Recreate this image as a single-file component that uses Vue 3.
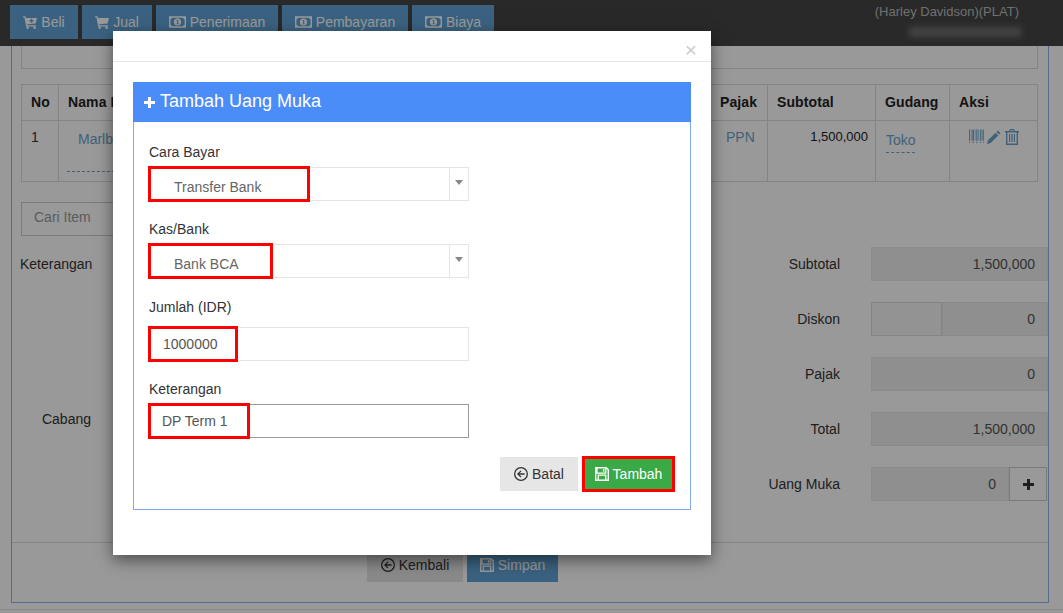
<script setup>
const navItems = [
  { label: 'Beli', icon: 'cart-plus', w: 68 },
  { label: 'Jual', icon: 'cart', w: 70 },
  { label: 'Penerimaan', icon: 'money', w: 122 },
  { label: 'Pembayaran', icon: 'money', w: 126 },
  { label: 'Biaya', icon: 'money', w: 82 },
]
const summary = ['Subtotal', 'Pajak', 'Total']
</script>

<template>
  <div class="page">
    <svg class="defs" aria-hidden="true">
      <symbol id="i-cart" viewBox="0 0 16 16"><path d="M0 1.5h2.8l.5 1.8H16l-1.6 6.4-9.6 1 .3 1.1h9.4v1.4H3.6L1.7 2.9H0zM5.3 13.2a1.4 1.4 0 1 1 0 2.8 1.4 1.4 0 0 1 0-2.8zm8 0a1.4 1.4 0 1 1 0 2.8 1.4 1.4 0 0 1 0-2.8z"/></symbol>
      <symbol id="i-cart-plus" viewBox="0 0 16 16"><path fill-rule="evenodd" d="M0 1.5h2.8l.5 1.8H16l-1.6 6.4-9.6 1 .3 1.1h9.4v1.4H3.6L1.7 2.9H0zM9 4.2v1.6H7.4v1.5H9v1.6h1.5V7.3h1.6V5.8h-1.6V4.2zM5.3 13.2a1.4 1.4 0 1 1 0 2.8 1.4 1.4 0 0 1 0-2.8zm8 0a1.4 1.4 0 1 1 0 2.8 1.4 1.4 0 0 1 0-2.8z"/></symbol>
      <symbol id="i-money" viewBox="0 0 18 14"><path fill-rule="evenodd" d="M0 1h18v12H0zm3 1.6A1.6 1.6 0 0 1 1.5 4.2v5.6A1.6 1.6 0 0 1 3 11.4h12a1.6 1.6 0 0 1 1.5-1.6V4.2A1.6 1.6 0 0 1 15 2.6zM9 3.2a3.8 3.8 0 1 1 0 7.6 3.8 3.8 0 0 1 0-7.6zM8 5v.9h.6v2.6H8v.9h2.4v-.9h-.6V5z"/></symbol>
      <symbol id="i-back" viewBox="1 1 14 14"><path fill-rule="evenodd" d="M8 1a7 7 0 1 1 0 14A7 7 0 0 1 8 1zm0 1.3a5.7 5.7 0 1 0 0 11.4A5.7 5.7 0 0 0 8 2.3zM7.6 4.4l.9.9-2 2h5.1v1.4H6.5l2 2-.9.9L4 8z"/></symbol>
      <symbol id="i-save" viewBox="1 1 14 14"><path fill-rule="evenodd" d="M1 1h11.5L15 3.5V15H1zm2.6 1.4v4.2h7.6V2.4zm5.3.6h1.5v2.8H8.9zM2.4 2.4v11.2h1.2V8.6h8.8v5h1.2V4.1l-1.2-1.2v4.9H2.4zm2.5 7.4v3.8h6.2V9.8z"/></symbol>
      <symbol id="i-plus" viewBox="0 0 12 12"><path d="M4.4 0h3.2v4.4H12v3.2H7.6V12H4.4V7.6H0V4.4h4.4z"/></symbol>
      <symbol id="i-barcode" viewBox="0 0 16 15"><path d="M0 0h1v12H0zm2 0h.6v12H2zm1.6 0h1.6v12H3.6zm2.6 0h.6v12h-.6zm1.6 0h1.2v12H7.8zm2.2 0h.6v12H10zm1.6 0h1v12h-1zm1.8 0h1v12h-1zm1.8 0h.8v12h-.8zM0 13h1v1.4H0zm3.6 0h1.6v1.4H3.6zm4.2 0H9v1.4H7.8zm3.8 0h1v1.4h-1zm3.6 0h.8v1.4h-.8z"/></symbol>
      <symbol id="i-pencil" viewBox="0 0 16 16"><path d="M12.4 0.6l3 3-1.6 1.6-3-3zM9.8 3.2l3 3-8.6 8.6L0 16l1.2-4.2z"/></symbol>
      <symbol id="i-trash" viewBox="0 0 14 16"><path fill-rule="evenodd" d="M5 0h4l1 2h4v1.4h-1V16H1V3.4H0V2h4zm.6 1.2L5.3 2h3.4l-.3-.8zM2.4 3.4v11.2h9.2V3.4zM4 5h1.2v8H4zm2.4 0h1.2v8H6.4zm2.4 0H10v8H8.8z"/></symbol>
    </svg>

    <header class="navbar">
      <nav class="nav-buttons">
        <button v-for="item in navItems" :key="item.label" class="btn btn-primary" :style="{ width: item.w + 'px' }">
          <svg class="ico" :class="{ wide: item.icon === 'money' }"><use :href="'#i-' + item.icon" /></svg>{{ item.label }}
        </button>
      </nav>
      <div class="user">
        <div>(Harley Davidson)(PLAT)</div>
        <div class="blurred"></div>
      </div>
    </header>

    <main class="panel">
      <div class="filter-box"></div>

      <table class="items">
        <thead>
          <tr>
            <th class="c-no">No</th>
            <th class="c-name">Nama Item</th>
            <th class="c-pajak">Pajak</th>
            <th class="c-sub">Subtotal</th>
            <th class="c-gudang">Gudang</th>
            <th class="c-aksi">Aksi</th>
          </tr>
        </thead>
        <tbody>
          <tr>
            <td class="no-cell">1</td>
            <td class="name-cell"><span class="link dashed name-link">Marlboro</span></td>
            <td class="link pajak-cell">PPN</td>
            <td class="num">1,500,000</td>
            <td class="gudang-cell"><span class="link dashed">Toko</span></td>
            <td class="aksi-cell">
              <svg class="a-bar"><use href="#i-barcode" /></svg>
              <svg class="a-pen"><use href="#i-pencil" /></svg>
              <svg class="a-trash"><use href="#i-trash" /></svg>
            </td>
          </tr>
        </tbody>
      </table>

      <input class="search" placeholder="Cari Item" />

      <section class="totals">
        <div class="left-labels">
          <label>Keterangan</label>
          <label>Cabang</label>
        </div>
        <div class="right-form">
          <div class="t-row"><label>{{ summary[0] }}</label><div class="ro">1,500,000</div></div>
          <div class="t-row"><label>Diskon</label><div class="group"><div class="free"></div><div class="ro grow">0</div></div></div>
          <div class="t-row"><label>{{ summary[1] }}</label><div class="ro">0</div></div>
          <div class="t-row"><label>{{ summary[2] }}</label><div class="ro">1,500,000</div></div>
          <div class="t-row"><label>Uang Muka</label><div class="group"><div class="ro grow">0</div><div class="add"><svg class="a-plus"><use href="#i-plus" /></svg></div></div></div>
        </div>
      </section>

      <footer class="panel-foot">
        <button class="btn btn-default back-btn"><svg class="ico"><use href="#i-back" /></svg>Kembali</button>
        <button class="btn btn-primary save-btn"><svg class="ico"><use href="#i-save" /></svg>Simpan</button>
      </footer>
    </main>
    <div class="page-foot"></div>

    <div class="backdrop"></div>

    <div class="modal">
      <div class="modal-head"><span class="close">×</span></div>
      <div class="modal-body">
        <div class="form-panel">
          <div class="form-head"><svg class="head-plus"><use href="#i-plus" /></svg>Tambah Uang Muka</div>
          <div class="form-body">
            <div class="f-label">Cara Bayar</div>
            <div class="field select">
              <span class="sel-text">Transfer Bank</span><span class="sel-arrow"></span>
              <i class="mark m-cara"></i>
            </div>
            <div class="f-label">Kas/Bank</div>
            <div class="field select">
              <span class="sel-text">Bank BCA</span><span class="sel-arrow"></span>
              <i class="mark m-kas"></i>
            </div>
            <div class="f-label l-jumlah">Jumlah (IDR)</div>
            <div class="field text">1000000<i class="mark m-jumlah"></i></div>
            <div class="f-label">Keterangan</div>
            <div class="field text focus">DP Term 1<i class="mark m-ket"></i></div>
            <div class="form-actions">
              <button class="btn batal"><svg class="ico"><use href="#i-back" /></svg>Batal</button>
              <button class="btn tambah"><svg class="ico"><use href="#i-save" /></svg>Tambah<i class="mark m-tambah"></i></button>
            </div>
          </div>
        </div>
      </div>
    </div>
  </div>
</template>

<style>
html, body { margin: 0; height: 100%; overflow: hidden; }
</style>

<style scoped>
.page {
  position: relative;
  width: 1063px;
  height: 613px;
  overflow: hidden;
  background: #fff;
  color: #333;
  font: 14px/20px "Liberation Sans", Arial, sans-serif;
}
.defs { position: absolute; width: 0; height: 0; }
.navbar {
  height: 46px;
  background: #454545;
  display: flex;
  justify-content: space-between;
  box-sizing: border-box;
}
.nav-buttons { display: flex; gap: 4px; padding: 5px 0 0 10px; align-items: flex-start; }
.btn {
  height: 34px;
  border: 0;
  padding: 0;
  font: inherit;
  display: inline-flex;
  align-items: center;
  justify-content: center;
  cursor: default;
}
.btn-primary { background: #62a4d6; color: #fff; }
.btn-default { background: #e6e6e6; color: #333; }
.ico { width: 14px; height: 14px; margin-right: 4px; fill: currentColor; flex: none; }
.ico.wide { width: 17px; height: 14px; margin-right: 4px; }
.user {
  display: flex;
  flex-direction: column;
  align-items: flex-end;
  padding: 3px 44px 0 0;
  color: #bbb;
  font-size: 13px;
  line-height: 18px;
  white-space: nowrap;
}
.blurred { width: 112px; height: 10px; margin: 6px -2px 0 0; background: #717171; filter: blur(3px); }

.panel {
  box-sizing: border-box;
  width: 1038px;
  height: 557px;
  margin-left: 11px;
  border: 1px solid #8db4ec;
  border-top: 0;
  padding: 0 10px;
  position: relative;
  display: flex;
  flex-direction: column;
}
.page-foot { margin-top: 6px; border-top: 1px solid #e5e5e5; }
.filter-box { height: 23px; border: 1px solid #ddd; border-top: 0; margin-left: -1px; width: 1017px; box-sizing: border-box; flex: none; }
.items {
  margin: 15px 0 0 -1px;
  width: 1017px;
  height: 98px;
  border-collapse: collapse;
  table-layout: fixed;
  border: 1px solid #689fd2;
  flex: none;
}
.items th, .items td { border: 1px solid #ddd; padding: 8px 9px; text-align: left; vertical-align: top; }
.items th { height: 20px; padding-top: 7px; font-weight: bold; color: #222; letter-spacing: .1px; vertical-align: middle; }
.c-no { width: 18px; }
.c-name { width: auto; }
.c-pajak { width: 38px; }
.c-sub { width: 89px; }
.c-gudang { width: 55px; }
.c-aksi { width: 69px; }
.link { color: #6aa3cc; }
.dashed { display: inline-block; border-bottom: 1px dashed #6aa3cc; }
.items .no-cell { padding-top: 6px; }
.items .name-cell { padding-left: 19px; }
.name-link { padding: 0 0 22px 11px; margin-left: -11px; width: 620px; }
.items .pajak-cell { padding: 6px 0 0 15px; }
.items .num { text-align: right; font-size: 13px; padding: 6px 7px 0 0; color: #222; }
.items .gudang-cell { padding: 9px 0 0 10px; }
.gudang-cell .dashed { padding-bottom: 2px; width: 29px; }
.items .aksi-cell { padding: 7px 0 0 19px; white-space: nowrap; font-size: 0; }
.aksi-cell svg { fill: #6aa3cc; vertical-align: top; }
.a-bar { width: 15px; height: 15px; margin-right: 3px; margin-top: 1px; }
.a-pen { width: 14px; height: 14px; margin-right: 4px; margin-top: 2px; }
.a-trash { width: 14px; height: 16px; margin-top: 1px; }

.search {
  box-sizing: border-box;
  width: 160px;
  height: 34px;
  margin: 20px 0 0 -1px;
  padding: 0 12px 4px;
  border: 1px solid #ccc;
  background: #fff;
  font: inherit;
  flex: none;
  outline: 0;
}
.search::placeholder { color: #999; opacity: 1; }

.totals { display: flex; justify-content: space-between; margin-top: 11px; flex: none; }
.left-labels {
  width: 71px;
  margin-left: -2px;
  text-align: right;
  display: flex;
  flex-direction: column;
  gap: 135px;
  padding-top: 7px;
}
.right-form { display: flex; flex-direction: column; gap: 21px; margin-right: -10px; }
.t-row { display: flex; align-items: center; gap: 31px; justify-content: flex-end; }
.ro, .group { width: 177px; height: 34px; box-sizing: border-box; }
.ro { background: #eee; color: #555; text-align: right; padding: 0 12px; line-height: 32px; border: 1px solid #e6e6e6; }
.group { display: flex; }
.free { width: 71px; border: 1px solid #ddd; box-sizing: border-box; background: #f5f5f5; }
.ro.grow { flex: 1; width: auto; }
.add { width: 38px; height: 34px; box-sizing: border-box; border: 1px solid #ccc; background: #fff; display: flex; align-items: center; justify-content: center; margin-right: 1px; }
.a-plus { width: 11px; height: 11px; fill: #333; }

.panel-foot {
  position: absolute;
  left: 0; right: 0;
  top: 496px;
  height: 60px;
  border-top: 1px solid #ddd;
  display: flex;
  justify-content: flex-start;
  gap: 4px;
  padding: 5px 0 0 355px;
  box-sizing: border-box;
}
.back-btn { width: 96px; }
.save-btn { width: 91px; }

.backdrop { position: absolute; inset: 0; background: rgba(0, 0, 0, .4); }

.modal {
  position: absolute;
  left: 113px;
  top: 31px;
  width: 598px;
  height: 524px;
  background: #fff;
  box-shadow: 0 5px 15px rgba(0, 0, 0, .5);
}
.modal-head { height: 30px; border-bottom: 1px solid #e5e5e5; position: relative; }
.close {
  position: absolute;
  right: 14px;
  top: 7px;
  font-size: 21px;
  line-height: 24px;
  color: #ccc;
}
.modal-body { padding: 20px; }
.form-panel { border: 1px solid #7fa8ec; border-top: 0; height: 428px; box-sizing: border-box; }
.form-head {
  height: 40px;
  box-sizing: border-box;
  margin: 0 -1px;
  padding: 0 0 2px 11px;
  background: #4b8df8;
  color: #fff;
  font-size: 18px;
  display: flex;
  align-items: center;
}
.head-plus { width: 11px; height: 11px; fill: #fff; margin: 2px 5px 0 0; }
.form-body { padding: 20px 15px 0; }
.f-label { height: 20px; margin-bottom: 5px; color: #333; }
.l-jumlah { padding-top: 1px; margin-bottom: 10px; }
.field {
  position: relative;
  box-sizing: border-box;
  width: 320px;
  height: 34px;
  margin-bottom: 18px;
  border: 1px solid #e5e5e5;
  color: #555;
}
.select { display: flex; justify-content: space-between; align-items: stretch; color: #666; }
.sel-text { padding: 6px 0 0 24px; line-height: 26px; }
.sel-arrow {
  width: 18px;
  border-left: 1px solid #e5e5e5;
  position: relative;
}
.sel-arrow::after {
  content: "";
  position: absolute;
  left: 5px;
  top: 12px;
  border: 4px solid transparent;
  border-top: 5px solid #888;
}
.text { padding-left: 13px; line-height: 32px; }
.focus { border-color: #999; margin-bottom: 19px; padding-left: 12px; }
.mark { position: absolute; box-sizing: border-box; border: 3px solid #f00; pointer-events: none; left: -2px; top: -2px; height: 36px; }
.m-cara { width: 162px; }
.m-kas { width: 125px; }
.m-jumlah { width: 90px; }
.m-ket { width: 102px; }
.form-actions { display: flex; justify-content: flex-end; gap: 5px; margin-right: 1px; }
.batal { width: 78px; background: #e6e6e6; color: #333; }
.tambah { width: 91px; background: #3aaa47; color: #fff; position: relative; }
.m-tambah { left: -1px; top: -1px; width: 93px; height: 36px; }
</style>
